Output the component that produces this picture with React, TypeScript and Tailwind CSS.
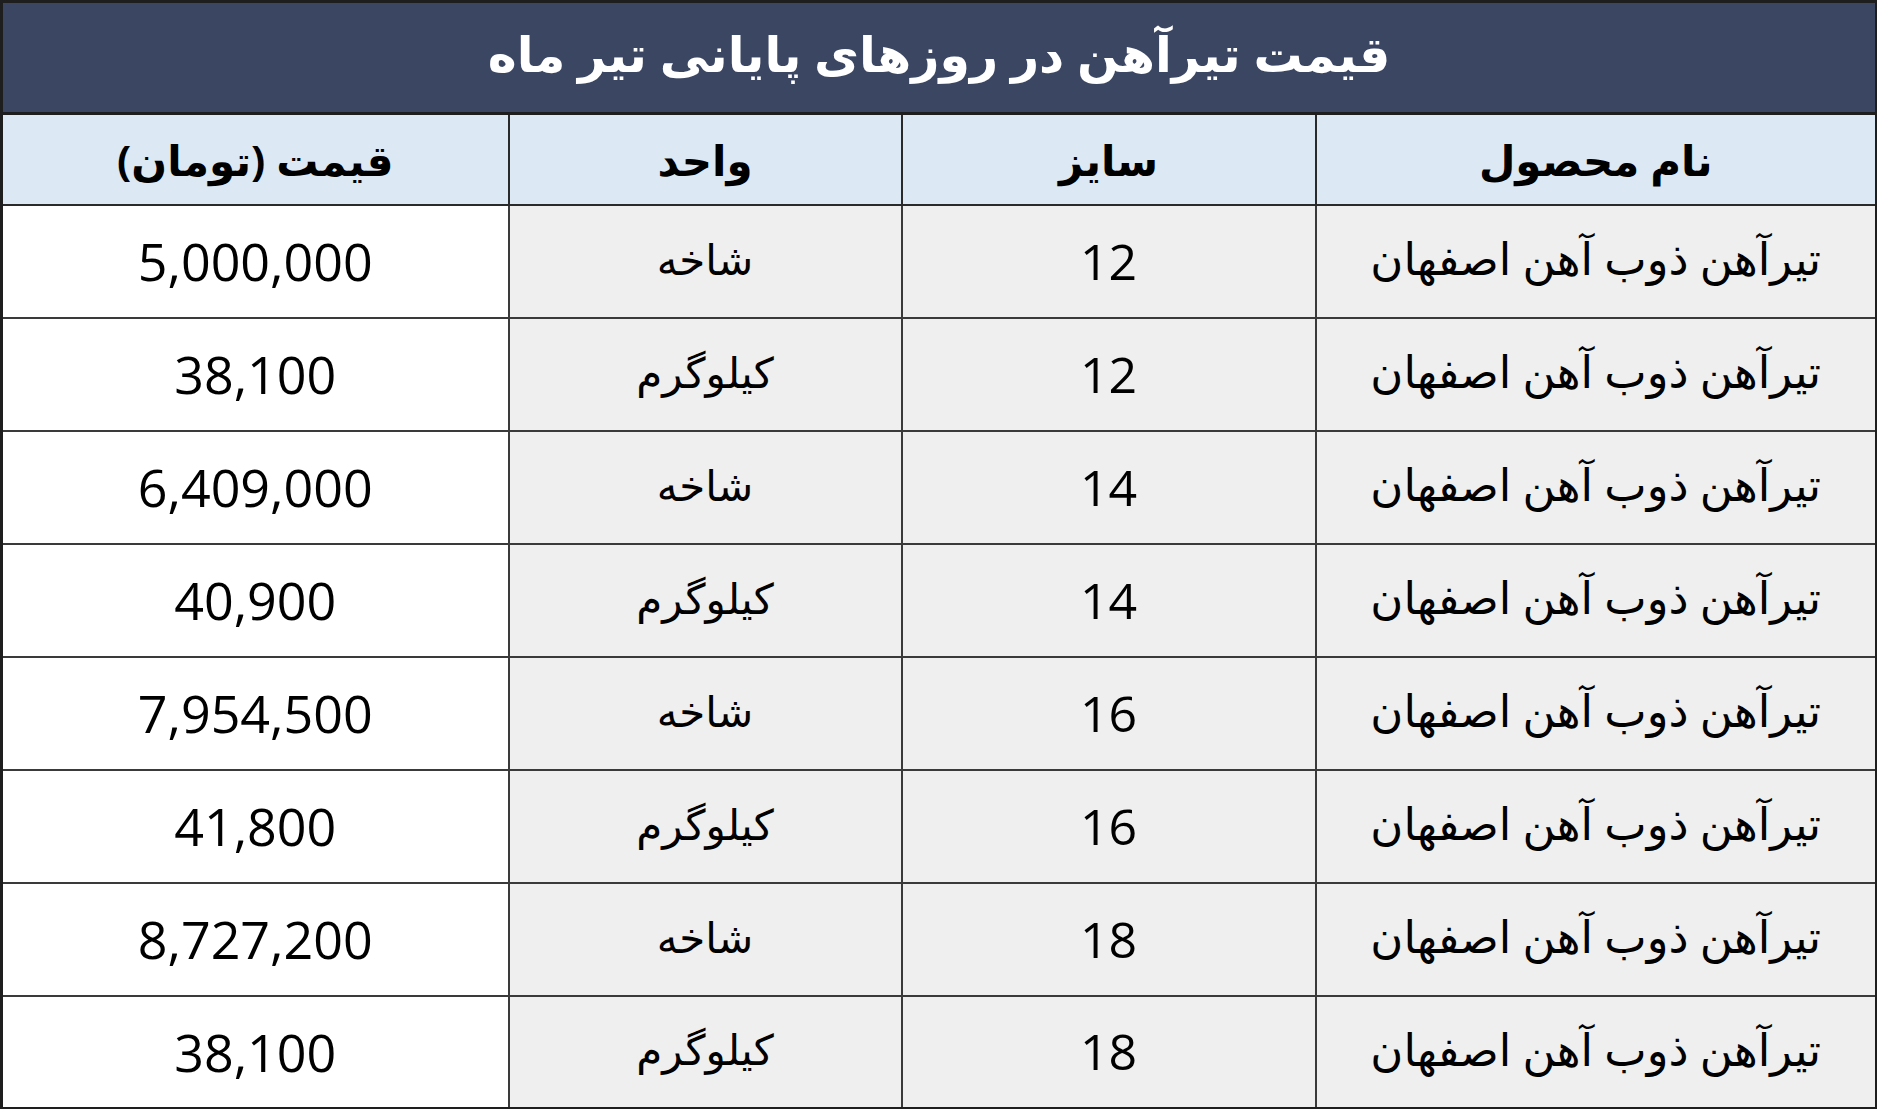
import React from 'react';

const ROWS = [
  { size: '12', unit: 'شاخه', price: '5,000,000' },
  { size: '12', unit: 'کیلوگرم', price: '38,100' },
  { size: '14', unit: 'شاخه', price: '6,409,000' },
  { size: '14', unit: 'کیلوگرم', price: '40,900' },
  { size: '16', unit: 'شاخه', price: '7,954,500' },
  { size: '16', unit: 'کیلوگرم', price: '41,800' },
  { size: '18', unit: 'شاخه', price: '8,727,200' },
  { size: '18', unit: 'کیلوگرم', price: '38,100' },
];

const PRODUCT = 'تیرآهن ذوب آهن اصفهان';

const App: React.FC = () => {
  return (
    <div className="w-[1877px] h-[1109px] bg-white">
      <table
        dir="rtl"
        className="w-[1877px] table-fixed border-collapse border-[3px] border-[#1e1e1e] font-['Open_Sans','DejaVu_Sans',sans-serif] text-black"
      >
        <colgroup>
          <col className="w-[561px]" />
          <col className="w-[414px]" />
          <col className="w-[393px]" />
          <col className="w-[507px]" />
        </colgroup>
        <thead>
          <tr className="h-[112px] bg-[#3b4663]">
            <th
              colSpan={4}
              className="border-[3px] border-[#1e1e1e] pb-2 text-center text-[49px] font-bold text-white"
            >
              قیمت تیرآهن در روزهای پایانی تیر ماه
            </th>
          </tr>
          <tr className="h-[91px] bg-[#dde8f5]">
            <th className="border-2 border-[#2a2a2a] text-center text-[42px] font-bold">
              نام محصول
            </th>
            <th className="border-2 border-[#2a2a2a] text-center text-[42px] font-bold">
              سایز
            </th>
            <th className="border-2 border-[#2a2a2a] text-center text-[42px] font-bold">
              واحد
            </th>
            <th className="border-2 border-[#2a2a2a] text-center text-[42px] font-bold">
              قیمت (تومان)
            </th>
          </tr>
        </thead>
        <tbody>
          {ROWS.map((row, i) => (
            <tr key={i} className="h-[113px]">
              <td className="border-2 border-[#3a3a3a] bg-[#efefef] text-center text-[45px] font-['Liberation_Serif','DejaVu_Sans',serif]">
                {PRODUCT}
              </td>
              <td className="border-2 border-[#3a3a3a] bg-[#efefef] text-center text-[50px]">
                {row.size}
              </td>
              <td className="border-2 border-[#3a3a3a] bg-[#efefef] text-center text-[42px] font-['Liberation_Serif','DejaVu_Sans',serif]">
                {row.unit}
              </td>
              <td className="border-2 border-[#3a3a3a] bg-white text-center text-[52px]">
                {row.price}
              </td>
            </tr>
          ))}
        </tbody>
      </table>
    </div>
  );
};

export default App;
